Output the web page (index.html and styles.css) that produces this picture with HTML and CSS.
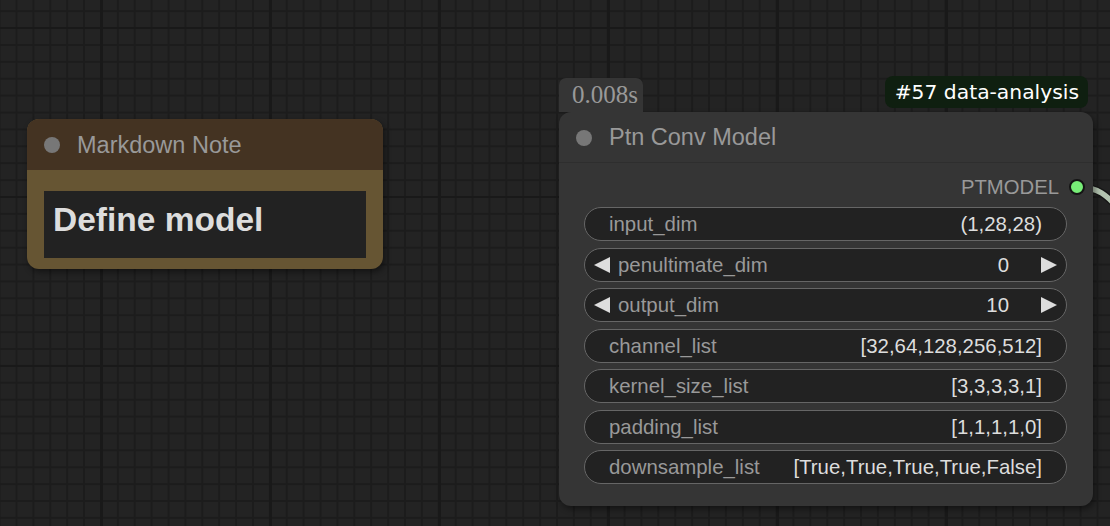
FILE: index.html
```html
<!DOCTYPE html>
<html>
<head>
<meta charset="utf-8">
<link rel="stylesheet" href="styles.css">
</head>
<body>
<div class="canvas">
  <svg class="links" width="1110" height="526" viewBox="0 0 1110 526">
    <path class="link-shadow" d="M1077 187 C1098 187 1106 194 1124 214"/>
    <path class="link" d="M1077 187 C1098 187 1106 194 1124 214"/>
  </svg>

  <div class="node note">
    <div class="node-title">
      <span class="title-dot"></span>
      <span class="title-text">Markdown Note</span>
    </div>
    <div class="note-body">
      <div class="note-text"><h1>Define model</h1></div>
    </div>
  </div>

  <div class="group">
    <div class="badges">
      <div class="time-badge">0.008s</div>
      <div class="id-badge">#57 data-analysis</div>
    </div>
    <div class="node conv">
      <div class="node-title conv-title">
        <span class="title-dot"></span>
        <span class="title-text">Ptn Conv Model</span>
      </div>
      <div class="conv-body">
        <div class="output-row">
          <span class="output-label">PTMODEL</span>
          <span class="slot-dot"></span>
        </div>
        <div class="widgets">
          <div class="widget">
            <span class="w-label">input_dim</span>
            <span class="w-value">(1,28,28)</span>
          </div>
          <div class="widget number">
            <svg class="arrow" width="16" height="16" viewBox="0 0 16 16"><polygon points="0,8 16,0 16,16"/></svg>
            <span class="w-label">penultimate_dim</span>
            <span class="w-value">0</span>
            <svg class="arrow" width="16" height="16" viewBox="0 0 16 16"><polygon points="0,0 16,8 0,16"/></svg>
          </div>
          <div class="widget number">
            <svg class="arrow" width="16" height="16" viewBox="0 0 16 16"><polygon points="0,8 16,0 16,16"/></svg>
            <span class="w-label">output_dim</span>
            <span class="w-value">10</span>
            <svg class="arrow" width="16" height="16" viewBox="0 0 16 16"><polygon points="0,0 16,8 0,16"/></svg>
          </div>
          <div class="widget">
            <span class="w-label">channel_list</span>
            <span class="w-value">[32,64,128,256,512]</span>
          </div>
          <div class="widget">
            <span class="w-label">kernel_size_list</span>
            <span class="w-value">[3,3,3,3,1]</span>
          </div>
          <div class="widget">
            <span class="w-label">padding_list</span>
            <span class="w-value">[1,1,1,1,0]</span>
          </div>
          <div class="widget">
            <span class="w-label">downsample_list</span>
            <span class="w-value">[True,True,True,True,False]</span>
          </div>
        </div>
      </div>
    </div>
  </div>
</div>
</body>
</html>
```

FILE: styles.css
```css
* { box-sizing: border-box; }

html, body {
  margin: 0;
  padding: 0;
  background: #222;
}

.canvas {
  position: relative;
  width: 1110px;
  height: 526px;
  overflow: hidden;
  font-family: "Liberation Sans", Arial, sans-serif;
  background-color: #232323;
  background-image:
    linear-gradient(to right, #191919 3px, transparent 3px),
    linear-gradient(to bottom, #191919 2px, transparent 2px),
    linear-gradient(to right, #1c1c1c 1.5px, transparent 1.5px),
    linear-gradient(to bottom, #1c1c1c 1.5px, transparent 1.5px);
  background-size: 169px 169px, 169px 169px, 16.9px 16.9px, 16.9px 16.9px;
  background-position: 100px 0, 0 27px, 15.5px 0, 0 10.2px;
}

.links {
  position: absolute;
  left: 0;
  top: 0;
}

.link-shadow {
  fill: none;
  stroke: #151515;
  stroke-width: 8;
}

.link {
  fill: none;
  stroke: #b3c4b0;
  stroke-width: 5.5;
}

.node {
  background: #353535;
  border-radius: 12px;
  box-shadow: 2px 3px 6px rgba(0, 0, 0, 0.45);
  overflow: hidden;
}

.node-title {
  display: flex;
  align-items: center;
  gap: 17px;
  height: 51px;
  padding-left: 17px;
  padding-top: 1px;
}

.title-dot {
  width: 16px;
  height: 16px;
  border-radius: 50%;
  background: #777;
  flex: none;
}

.title-text {
  font-size: 23.5px;
  color: #999;
  white-space: nowrap;
}

/* Markdown note */
.note {
  position: absolute;
  left: 27px;
  top: 119px;
  width: 356px;
  height: 150px;
  background: #665533;
  display: flex;
  flex-direction: column;
}

.note .node-title {
  background: #443322;
}

.note-body {
  flex: 1;
  padding: 21px 17px 11px;
}

.note-text {
  height: 67px;
  background: #222;
  padding: 9px 9px 0;
}

.note-text h1 {
  margin: 0;
  font-size: 33.5px;
  line-height: 40px;
  font-weight: bold;
  color: #ddd;
}

/* Conv node */
.group {
  position: absolute;
  left: 559px;
  top: 76px;
  width: 534px;
}

.badges {
  display: flex;
  justify-content: space-between;
  align-items: flex-start;
  height: 36px;
}

.time-badge {
  margin-top: 2px;
  height: 34px;
  width: 84px;
  background: #353535;
  border-radius: 7px 7px 0 0;
  font-family: "Liberation Serif", "Times New Roman", serif;
  font-size: 25px;
  color: #999;
  padding-left: 13px;
  line-height: 34px;
}

.id-badge {
  height: 32px;
  margin-right: 5px;
  padding: 0 9px 0 10px;
  background: #0f1f10;
  border-radius: 8px;
  font-family: "DejaVu Sans", sans-serif;
  font-size: 20.3px;
  line-height: 32px;
  color: #fff;
  white-space: nowrap;
}

.conv {
  height: 394px;
}

.conv-title {
  border-bottom: 1px solid #2e2e2e;
}

.conv-body {
  padding: 7px 26px 22px 25px;
}

.output-row {
  display: flex;
  justify-content: flex-end;
  align-items: center;
  gap: 10px;
  height: 34px;
  margin-right: -17px;
  margin-bottom: 3px;
}

.output-label {
  font-size: 20.3px;
  color: #999;
}

.slot-dot {
  width: 16px;
  height: 16px;
  border-radius: 50%;
  background: #77ee77;
  border: 2px solid #141414;
  flex: none;
  margin-right: -1px;
}

.widgets {
  display: flex;
  flex-direction: column;
  gap: 6.5px;
}

.widget {
  display: flex;
  align-items: center;
  height: 34px;
  border: 1px solid #666;
  border-radius: 17px;
  background: #222;
  padding: 1px 24px 0;
  font-size: 20.4px;
  white-space: nowrap;
}

.w-label {
  color: #999;
  flex: 1;
}

.w-value {
  color: #ddd;
}

.widget.number {
  padding: 1px 9px 0;
}

.widget.number .w-label {
  margin-left: 8px;
}

.widget.number .w-value {
  margin-right: 32px;
}

.arrow {
  flex: none;
  fill: #ddd;
  margin-top: -1px;
}
```
